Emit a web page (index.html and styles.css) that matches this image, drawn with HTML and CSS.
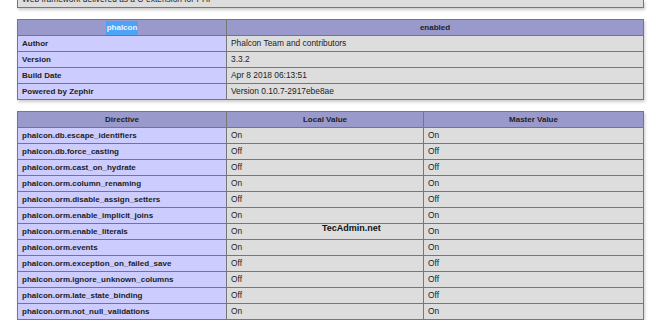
FILE: index.html
```html
<!DOCTYPE html>
<html>
<head>
<meta charset="utf-8">
<link rel="stylesheet" href="styles.css">
</head>
<body>
<div class="page">
  <div class="desc"><span class="desc-text">Web framework delivered as a C-extension for PHP</span></div>

  <table class="info">
    <tr class="h"><th class="c1"><span class="sel">phalcon</span></th><th>enabled</th></tr>
    <tr><td class="e">Author</td><td class="v">Phalcon Team and contributors</td></tr>
    <tr><td class="e">Version</td><td class="v">3.3.2</td></tr>
    <tr><td class="e">Build Date</td><td class="v">Apr 8 2018 06:13:51</td></tr>
    <tr><td class="e">Powered by Zephir</td><td class="v">Version 0.10.7-2917ebe8ae</td></tr>
  </table>

  <table class="info dir">
    <tr class="h"><th class="c1">Directive</th><th class="c2">Local Value</th><th>Master Value</th></tr>
    <tr><td class="e">phalcon.db.escape_identifiers</td><td class="v">On</td><td class="v">On</td></tr>
    <tr><td class="e">phalcon.db.force_casting</td><td class="v">Off</td><td class="v">Off</td></tr>
    <tr><td class="e">phalcon.orm.cast_on_hydrate</td><td class="v">Off</td><td class="v">Off</td></tr>
    <tr><td class="e">phalcon.orm.column_renaming</td><td class="v">On</td><td class="v">On</td></tr>
    <tr><td class="e">phalcon.orm.disable_assign_setters</td><td class="v">Off</td><td class="v">Off</td></tr>
    <tr><td class="e">phalcon.orm.enable_implicit_joins</td><td class="v">On</td><td class="v">On</td></tr>
    <tr><td class="e">phalcon.orm.enable_literals</td><td class="v">On</td><td class="v">On</td></tr>
    <tr><td class="e">phalcon.orm.events</td><td class="v">On</td><td class="v">On</td></tr>
    <tr><td class="e">phalcon.orm.exception_on_failed_save</td><td class="v">Off</td><td class="v">Off</td></tr>
    <tr><td class="e">phalcon.orm.ignore_unknown_columns</td><td class="v">Off</td><td class="v">Off</td></tr>
    <tr><td class="e">phalcon.orm.late_state_binding</td><td class="v">Off</td><td class="v">Off</td></tr>
    <tr><td class="e">phalcon.orm.not_null_validations</td><td class="v">On</td><td class="v">On</td></tr>
  </table>
</div>
<div class="watermark">TecAdmin.net</div>
</body>
</html>
```

FILE: styles.css
```css
html, body {
  margin: 0;
  padding: 0;
  background: #fff;
}
body {
  font-family: "Liberation Sans", Arial, sans-serif;
  color: #222;
  position: relative;
  width: 660px;
  height: 320px;
  overflow: hidden;
}
.page {
  padding-left: 17px;
}
.desc {
  width: 625px;
  height: 7px;
  overflow: hidden;
  background: #ddd;
  border: 1px solid #777;
  border-top: none;
  box-shadow: 1px 2px 3px #ccc;
  font-size: 8.4px;
  line-height: 9px;
}
.desc-text {
  display: block;
  margin-top: -5px;
  padding-left: 4px;
  color: #222;
}
.info {
  border-collapse: collapse;
  width: 627px;
  margin-top: 11px;
  box-shadow: 1px 2px 3px #ccc;
  table-layout: fixed;
}
.dir {
  margin-top: 11px;
}
.info th, .info td {
  border: 1px solid #777;
  font-size: 8.4px;
  height: 15px;
  line-height: 15px;
  padding: 0 4px;
  white-space: nowrap;
  overflow: hidden;
  box-sizing: border-box;
}
.info .c1 {
  width: 209px;
}
.info .c2 {
  width: 197px;
}
.h th {
  background: #99c;
  font-weight: bold;
  font-size: 8px;
  text-align: center;
  color: #222;
}
.e {
  background: #ccf;
  font-weight: bold;
  font-size: 8px;
}
.info td.e {
  font-size: 8px;
}
.v {
  background: #ddd;
}
.sel {
  background: #4da3f5;
  color: #eef4ff;
  padding: 2px 1px 3px;
}
.watermark {
  position: absolute;
  left: 322px;
  top: 223px;
  font-family: "Liberation Sans", Arial, sans-serif;
  font-weight: bold;
  font-size: 9px;
  color: #111;
}
```
